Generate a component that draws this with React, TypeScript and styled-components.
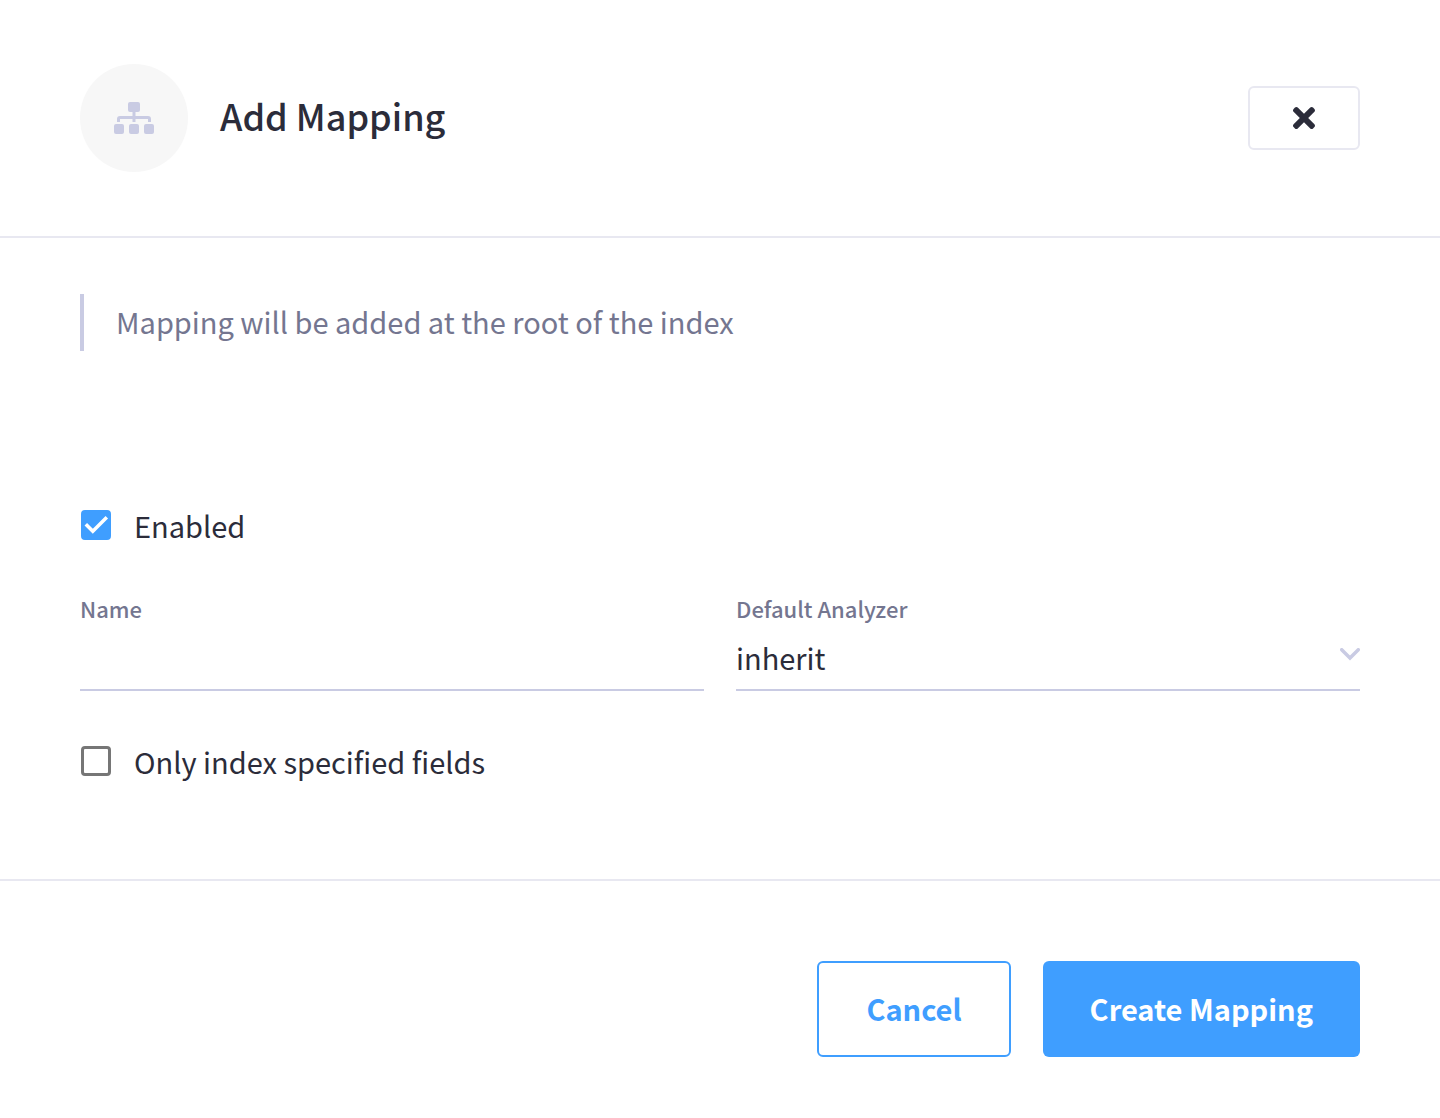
import React, { useState } from "react";
import styled, { createGlobalStyle } from "styled-components";
import { FaTimes } from "react-icons/fa";

const color = {
  text: "#2b2c3a",
  muted: "#747690",
  line: "#e8e8f1",
  field: "#c9cbe3",
  primary: "#3f9eff",
  box: "#767676",
};

const GlobalStyle = createGlobalStyle`
  *, *::before, *::after { box-sizing: border-box; }
  body {
    margin: 0;
    background: #fff;
    color: ${color.text};
    font-family: "Noto Sans CJK SC", "Noto Sans", sans-serif;
    font-size: 29px;
    line-height: 48px;
  }
  button, input, select { font: inherit; color: inherit; }
`;

const Dialog = styled.main`
  display: flex;
  flex-direction: column;
`;

const Header = styled.header`
  display: flex;
  align-items: center;
  gap: 32px;
  padding: 64px 80px;
  border-bottom: 2px solid ${color.line};
`;

const IconCircle = styled.div`
  display: flex;
  align-items: center;
  justify-content: center;
  width: 108px;
  height: 108px;
  border-radius: 50%;
  background: #f7f7f7;
  color: ${color.field};
`;

const Title = styled.h1`
  flex: 1;
  margin: 0;
  padding-bottom: 6px;
  font-size: 36px;
  font-weight: 500;
  line-height: 48px;
`;

const CloseButton = styled.button`
  display: flex;
  align-items: center;
  justify-content: center;
  width: 112px;
  height: 64px;
  padding: 0;
  border: 2px solid ${color.line};
  border-radius: 6px;
  background: #fff;
  font-size: 32px;
  cursor: pointer;
`;

const Form = styled.form`
  display: flex;
  flex-direction: column;
`;

const Body = styled.div`
  display: flex;
  flex-direction: column;
  padding: 56px 80px 94px;
  border-bottom: 2px solid ${color.line};
`;

const Note = styled.p`
  margin: 0 0 150px;
  padding: 3px 32px 6px;
  border-left: 4px solid ${color.field};
  color: ${color.muted};
`;

const CheckRow = styled.label`
  display: flex;
  align-items: center;
  align-self: flex-start;
  gap: 23px;
  padding-left: 1px;
  cursor: pointer;
`;

const CheckHolder = styled.span`
  display: grid;
  width: 30px;
  height: 30px;

  & > * { grid-area: 1 / 1; }
`;

const CheckInput = styled.input`
  appearance: none;
  width: 30px;
  height: 30px;
  margin: 0;
  border: 3px solid ${color.box};
  border-radius: 4px;
  background: #fff;
  cursor: pointer;

  &:checked {
    border-color: ${color.primary};
    background: ${color.primary};
  }
  & + svg { visibility: hidden; }
  &:checked + svg { visibility: visible; }
`;

const Tick = styled.svg`
  color: #fff;
  pointer-events: none;
`;

const Fields = styled.div`
  display: grid;
  grid-template-columns: 1fr 1fr;
  gap: 32px;
  margin: 43px 0 46px;
`;

const Field = styled.div`
  display: flex;
  flex-direction: column;
  gap: 1px;
`;

const FieldLabel = styled.label`
  color: ${color.muted};
  font-size: 22px;
  font-weight: 500;
  line-height: 32px;
`;

const TextInput = styled.input`
  width: 100%;
  height: 66px;
  padding: 0;
  border: 0;
  border-bottom: 2px solid ${color.field};
  border-radius: 0;
  background: none;
  outline: none;
`;

const SelectHolder = styled.div`
  display: grid;

  & > * { grid-area: 1 / 1; }
`;

const Select = styled.select`
  appearance: none;
  width: 100%;
  height: 66px;
  padding: 0 32px 0 0;
  border: 0;
  border-bottom: 2px solid ${color.field};
  border-radius: 0;
  background: none;
  outline: none;
`;

const Chevron = styled.svg`
  justify-self: end;
  margin-top: 23px;
  color: ${color.field};
  pointer-events: none;
`;

const Footer = styled.footer`
  display: flex;
  justify-content: flex-end;
  gap: 32px;
  padding: 80px 80px 60px;
`;

const Action = styled.button<{ $primary?: boolean }>`
  height: 96px;
  padding: 0 47px 2px;
  border: ${(p) => (p.$primary ? "0" : `2px solid ${color.primary}`)};
  border-radius: 6px;
  background: ${(p) => (p.$primary ? color.primary : "#fff")};
  color: ${(p) => (p.$primary ? "#fff" : color.primary)};
  font-weight: 700;
  cursor: pointer;
`;

function SitemapIcon() {
  return (
    <svg width="40" height="32" viewBox="0 0 40 32" fill="currentColor" aria-hidden="true">
      <rect x="14" y="0" width="12" height="10" rx="2" />
      <rect x="0" y="22" width="10" height="10" rx="2" />
      <rect x="15" y="22" width="10" height="10" rx="2" />
      <rect x="30" y="22" width="10" height="10" rx="2" />
      <path
        d="M20 9v11M4.500 20v-3q0-1.500 1.500-1.500h28q1.500 0 1.500 1.500v3"
        fill="none"
        stroke="currentColor"
        strokeWidth="3"
      />
    </svg>
  );
}

interface CheckProps {
  label: string;
  checked: boolean;
  onChange: (checked: boolean) => void;
}

function Check({ label, checked, onChange }: CheckProps) {
  return (
    <CheckRow>
      <CheckHolder>
        <CheckInput type="checkbox" checked={checked} onChange={(e) => onChange(e.target.checked)} />
        <Tick width="30" height="30" viewBox="0 0 30 30" aria-hidden="true">
          <path d="M4.800 14.200l7 7L25.800 7.200" fill="none" stroke="currentColor" strokeWidth="3.500" />
        </Tick>
      </CheckHolder>
      {label}
    </CheckRow>
  );
}

export default function App() {
  const [enabled, setEnabled] = useState(true);
  const [onlySpecified, setOnlySpecified] = useState(false);
  const [name, setName] = useState("");

  return (
    <Dialog>
      <GlobalStyle />
      <Header>
        <IconCircle>
          <SitemapIcon />
        </IconCircle>
        <Title>Add Mapping</Title>
        <CloseButton type="button" aria-label="Close">
          <FaTimes />
        </CloseButton>
      </Header>
      <Form onSubmit={(e) => e.preventDefault()}>
        <Body>
          <Note>Mapping will be added at the root of the index</Note>
          <Check label="Enabled" checked={enabled} onChange={setEnabled} />
          <Fields>
            <Field>
              <FieldLabel htmlFor="mapping-name">Name</FieldLabel>
              <TextInput id="mapping-name" value={name} onChange={(e) => setName(e.target.value)} />
            </Field>
            <Field>
              <FieldLabel htmlFor="default-analyzer">Default Analyzer</FieldLabel>
              <SelectHolder>
                <Select id="default-analyzer" defaultValue="inherit">
                  <option value="inherit">inherit</option>
                </Select>
                <Chevron width="20" height="13" viewBox="0 0 20 13" aria-hidden="true">
                  <path
                    d="M1.700 1.700l8.300 8.300 8.300-8.300"
                    fill="none"
                    stroke="currentColor"
                    strokeWidth="3.500"
                    strokeLinecap="round"
                  />
                </Chevron>
              </SelectHolder>
            </Field>
          </Fields>
          <Check
            label="Only index specified fields"
            checked={onlySpecified}
            onChange={setOnlySpecified}
          />
        </Body>
        <Footer>
          <Action type="button">Cancel</Action>
          <Action type="submit" $primary>
            Create Mapping
          </Action>
        </Footer>
      </Form>
    </Dialog>
  );
}
